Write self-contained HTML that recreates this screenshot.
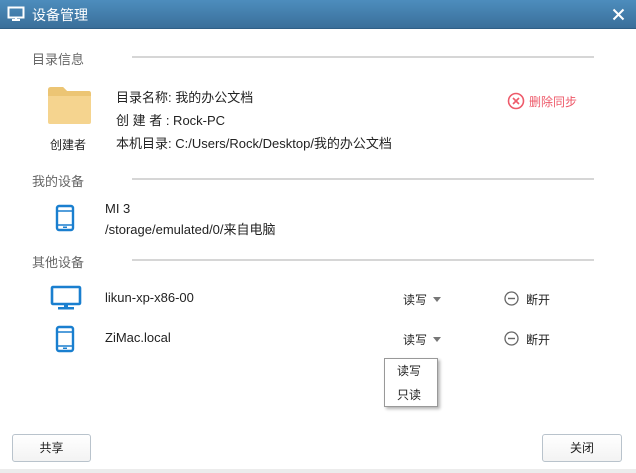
<!DOCTYPE html>
<html><head><meta charset="utf-8"><style>
*{margin:0;padding:0;box-sizing:border-box}
body{width:636px;height:473px;background:#fff;position:relative;overflow:hidden;font-family:"Liberation Sans","Noto Sans CJK SC",sans-serif;font-size:12px;color:#222}
.a{position:absolute;white-space:nowrap}
.t{font-size:13px}
.title{left:0;top:0;width:636px;height:29px;background:linear-gradient(#4d8dbd,#3a6f9a);border-bottom:1px solid #2f5f86}
.sec{color:#666;font-size:13px}
.line{height:2px;background:#d6d6d6}
.btn{border:1px solid #b9c3cc;border-radius:3px;background:linear-gradient(#fff,#f3f3f3);text-align:center;line-height:26px;font-size:12px}
.tri{width:0;height:0;border-left:4px solid transparent;border-right:4px solid transparent;border-top:5px solid #777}
</style></head><body>
<div class="a title"></div>
<svg class="a" style="left:7px;top:6px" width="18" height="17" viewBox="0 0 18 17"><rect x="1.5" y="1.5" width="15" height="10" fill="none" stroke="#fff" stroke-width="2"/><rect x="5" y="13" width="8" height="2" fill="#fff"/><rect x="8" y="11" width="2" height="3" fill="#fff"/></svg>
<div class="a" style="left:32px;top:5px;color:#fff;font-size:14px">设备管理</div>
<svg class="a" style="left:612px;top:8px" width="13" height="13"><path d="M1.5 1.5L11.5 11.5M11.5 1.5L1.5 11.5" stroke="#fff" stroke-width="2"/></svg>

<div class="a sec" style="left:32px;top:49px">目录信息</div>
<div class="a line" style="left:132px;top:56px;width:462px"></div>
<svg class="a" style="left:46px;top:86px" width="46" height="39" viewBox="0 0 46 39"><path d="M2 4Q2 1 5 1H17L21 5H43Q45 5 45 8V36Q45 38 43 38H4Q2 38 2 36Z" fill="#f5d48f"/><path d="M2 4Q2 1 5 1H17L21 5H43Q45 5 45 8V10H2Z" fill="#ecc574"/></svg>
<div class="a" style="left:50px;top:136px">创建者</div>
<div class="a t" style="left:116px;top:87px">目录名称: 我的办公文档</div>
<div class="a t" style="left:116px;top:110px">创 建 者 : Rock-PC</div>
<div class="a t" style="left:116px;top:133px">本机目录: C:/Users/Rock/Desktop/我的办公文档</div>
<svg class="a" style="left:507px;top:92px" width="18" height="18"><circle cx="9" cy="9" r="7.5" fill="none" stroke="#ee5a6a" stroke-width="1.6"/><path d="M6 6L12 12M12 6L6 12" stroke="#ee5a6a" stroke-width="1.6"/></svg>
<div class="a" style="left:529px;top:93px;color:#ee5a6a">删除同步</div>

<div class="a sec" style="left:32px;top:171px">我的设备</div>
<div class="a line" style="left:132px;top:178px;width:462px"></div>
<svg class="a" style="left:55px;top:204px" width="20" height="28" viewBox="0 0 20 28"><rect x="2" y="2" width="16" height="24" rx="2" fill="none" stroke="#1a7fcf" stroke-width="2.4"/><path d="M2 7H18M2 21H18" stroke="#1a7fcf" stroke-width="1.5"/><rect x="8" y="22.5" width="4" height="1.5" fill="#1a7fcf"/></svg>
<div class="a t" style="left:105px;top:201px">MI 3</div>
<div class="a t" style="left:105px;top:219px">/storage/emulated/0/来自电脑</div>

<div class="a sec" style="left:32px;top:252px">其他设备</div>
<div class="a line" style="left:132px;top:259px;width:462px"></div>
<svg class="a" style="left:50px;top:285px" width="32" height="26" viewBox="0 0 32 26"><rect x="2" y="2" width="28" height="17" rx="1" fill="none" stroke="#1a7fcf" stroke-width="2.6"/><rect x="14" y="19" width="4" height="3" fill="#1a7fcf"/><rect x="8" y="22" width="16" height="2.5" fill="#1a7fcf"/></svg>
<div class="a t" style="left:105px;top:290px">likun-xp-x86-00</div>
<svg class="a" style="left:55px;top:325px" width="20" height="28" viewBox="0 0 20 28"><rect x="2" y="2" width="16" height="24" rx="2" fill="none" stroke="#1a7fcf" stroke-width="2.4"/><path d="M2 7H18M2 21H18" stroke="#1a7fcf" stroke-width="1.5"/><rect x="8" y="22.5" width="4" height="1.5" fill="#1a7fcf"/></svg>
<div class="a t" style="left:105px;top:330px">ZiMac.local</div>

<div class="a" style="left:403px;top:291px">读写</div>
<div class="a tri" style="left:433px;top:297px"></div>
<div class="a" style="left:403px;top:331px">读写</div>
<div class="a tri" style="left:433px;top:337px"></div>
<svg class="a" style="left:504px;top:291px" width="15" height="15"><circle cx="7.5" cy="7.5" r="6.5" fill="none" stroke="#666" stroke-width="1.3"/><path d="M4 7.5H11" stroke="#666" stroke-width="1.4"/></svg>
<div class="a" style="left:526px;top:291px">断开</div>
<svg class="a" style="left:504px;top:331px" width="15" height="15"><circle cx="7.5" cy="7.5" r="6.5" fill="none" stroke="#666" stroke-width="1.3"/><path d="M4 7.5H11" stroke="#666" stroke-width="1.4"/></svg>
<div class="a" style="left:526px;top:331px">断开</div>

<div class="a" style="left:384px;top:358px;width:54px;height:49px;border:1px solid #999;background:#fff;box-shadow:2px 2px 3px rgba(0,0,0,.3)"></div>
<div class="a" style="left:397px;top:362px">读写</div>
<div class="a" style="left:397px;top:386px">只读</div>

<div class="a btn" style="left:12px;top:434px;width:79px;height:28px">共享</div>
<div class="a btn" style="left:542px;top:434px;width:80px;height:28px">关闭</div>
<div class="a" style="left:0;top:469px;width:636px;height:4px;background:#ececec"></div>
</body></html>
